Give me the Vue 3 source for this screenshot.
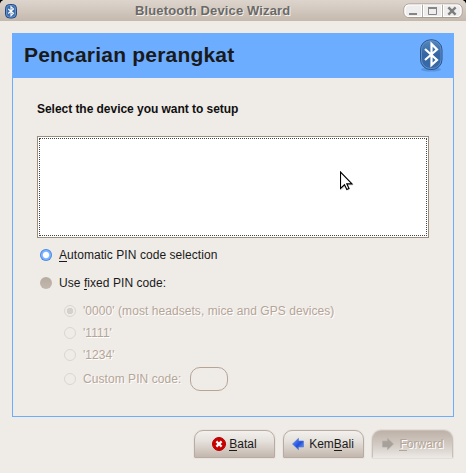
<script setup>
const pins = [
  { text: "'0000' (most headsets, mice and GPS devices)", on: true, cls: 'p0' },
  { text: "'1111'", on: false, cls: 'p1' },
  { text: "'1234'", on: false, cls: 'p2' },
  { text: 'Custom PIN code:', on: false, cls: 'p3', entry: true },
]
</script>

<template>
  <div class="window">
    <header class="titlebar">
      <svg class="app-icon" width="12" height="15" viewBox="0 0 12 15">
        <rect x=".5" y=".5" width="11" height="13.500" rx="4" fill="#3d6dab" stroke="#204a87" />
        <rect x="1.500" y="1.500" width="9" height="11.500" rx="3" fill="none" stroke="#6e9acd" stroke-width=".8" />
        <path d="M3.200 5 8.500 9.300 6 11.700V2.700l2.500 2.200L3.200 9.500" fill="none" stroke="#fff" stroke-width="1.100" />
      </svg>
      <h1 class="caption"><span>Bluetooth Device Wizard</span></h1>
      <div class="controls">
        <svg width="60" height="16" viewBox="0 0 60 16">
          <rect x=".9" y="1" width="58.200" height="13.500" rx="5" fill="#efeded" stroke="#a99c91" />
          <rect x="2" y="2" width="56" height="11.500" rx="4" fill="none" stroke="#fff" stroke-width="1.200" />
          <path d="M19.500 1.500v12.500M39.500 1.500v12.500" stroke="#fff" stroke-width="3" />
          <path d="M19.500 1.500v12.500M39.500 1.500v12.500" stroke="#b5aaa0" />
          <path d="M6 11h8" stroke="#858585" stroke-width="2" />
          <path d="M25.500 5v6.500h8V5" fill="none" stroke="#858585" />
          <path d="M25 5h9" stroke="#858585" stroke-width="2" />
          <path d="m46.200 5.200 5.600 5.600M51.800 5.200l-5.600 5.600" stroke="#7d7d7d" stroke-width="2.400" stroke-linecap="square" />
        </svg>
      </div>
    </header>

    <main class="page">
      <div class="banner">
        <h2><span>Pencarian perangkat</span></h2>
        <svg class="logo" width="24" height="33" viewBox="0 0 24 33">
          <defs>
            <linearGradient id="bt" x1="0" y1="0" x2="0" y2="1">
              <stop offset="0" stop-color="#5688bd" />
              <stop offset=".5" stop-color="#3465a4" />
              <stop offset="1" stop-color="#396ba9" />
            </linearGradient>
          </defs>
          <ellipse cx="12" cy="30.500" rx="10" ry="2" fill="#3465a4" opacity=".35" />
          <rect x="1.500" y=".8" width="21.500" height="29.700" rx="10" fill="url(#bt)" stroke="#275590" />
          <rect x="2.500" y="1.800" width="19.500" height="27.700" rx="9" fill="none" stroke="#628fc4" />
          <path d="M6 10 18 21 12.500 26V5l5.500 5.500L6 21" fill="none" stroke="#fff" stroke-width="2.200" />
        </svg>
      </div>
      <div class="content">
        <p class="prompt"><span>Select the device you want to setup</span></p>
        <div class="devices"><div class="focus"></div></div>
        <label class="row auto"><i class="radio active"></i><span class="t"><u>A</u>utomatic PIN code selection</span></label>
        <label class="row fixed"><i class="radio idle"></i><span class="t">Use <u>f</u>ixed PIN code:</span></label>
        <div class="pins">
          <label v-for="p in pins" :key="p.text" class="row dim" :class="p.cls">
            <i class="radio off" :class="{ on: p.on }"></i><span class="t">{{ p.text }}</span>
            <b v-if="p.entry" class="entry"></b>
          </label>
        </div>
      </div>
      <svg class="pointer" width="15" height="22" viewBox="0 0 15 22">
        <path d="M1.500 2.500v17l4-4 2.200 4.200 2.300-1.200-2-4h5z" fill="#777" opacity=".25" />
        <path d="M.5 1v16.500l4-3.700 2.300 4.700 2.200-1-2.200-4.700H12z" fill="#fff" stroke="#000" stroke-width="1.150" />
      </svg>
    </main>

    <footer class="actions">
      <button class="btn">
        <svg width="14" height="14" viewBox="0 0 14 14">
          <circle cx="7" cy="7" r="6.500" fill="#cc0000" stroke="#b00000" />
          <path d="m5.200 5.200 3.600 3.600M8.800 5.200 5.200 8.800" stroke="#fff" stroke-width="2.300" stroke-linecap="square" />
        </svg>
        <span class="t"><u>B</u>atal</span>
      </button>
      <button class="btn back">
        <svg width="12" height="14" viewBox="0 0 12 14">
          <defs>
            <linearGradient id="ar" x1="0" y1="0" x2="1" y2="1">
              <stop offset="0" stop-color="#6d9cff" />
              <stop offset=".55" stop-color="#2050dc" />
              <stop offset="1" stop-color="#7ba2f5" />
            </linearGradient>
          </defs>
          <path d="M.5 7 6.500 1.300v2.700h5v6h-5v2.700z" fill="url(#ar)" stroke="#4d76d0" stroke-width=".6" />
        </svg>
        <span class="t">Kem<u>B</u>ali</span>
      </button>
      <button class="btn disabled" disabled>
        <svg width="12" height="14" viewBox="0 0 12 14">
          <path d="M11.500 7 5.500 1.300v2.700h-5v6h5v2.700z" fill="#a7a19b" stroke="#b3aca6" stroke-width=".6" />
        </svg>
        <span class="t"><u>F</u>orward</span>
      </button>
    </footer>
  </div>
</template>

<style>
body { background: #000; }
</style>

<style scoped>
* { box-sizing: border-box; }
.window {
  width: 466px; height: 473px; overflow: hidden;
  display: flex; flex-direction: column;
  background: #efebe7; border-radius: 5px 5px 0 0;
  font: 12px/14px "Liberation Sans", Arial, sans-serif; color: #1a1a1a;
}
h1, h2, p { margin: 0; }
.titlebar {
  height: 21px; flex: none; display: flex; align-items: flex-start;
  padding: 0 3px 0 5px; background: linear-gradient(#ddd5cd, #c5b9ae);
}
.app-icon { margin-top: 4px; }
.caption {
  flex: 1; padding: 3px 0 0 118px; font-size: 13px; line-height: 16px; white-space: nowrap;
  letter-spacing: .13px; color: #6b6967; text-shadow: 1px 1px #f5f1ed;
}
.controls { height: 16px; margin-top: 3px; }
.controls svg { display: block; }
.page {
  position: relative; flex: none; width: 442px; height: 384px;
  margin: 12px 0 0 12px; border: 1px solid #6cadff;
}
.banner {
  height: 44px; display: flex; justify-content: space-between; align-items: flex-start;
  padding: 5px 10px 0 11px; background: #6cadff;
}
h2 { font-size: 21px; line-height: 24px; padding-top: 4px; white-space: nowrap; letter-spacing: .2px; }
.content { padding: 24px 24px 0; }
.prompt { font-weight: bold; white-space: nowrap; color: #101010; letter-spacing: -.04px; }
.devices {
  height: 102px; margin-top: 20px; padding: 1px;
  background: #fff; border: 1px solid #9c8c7e;
}
.focus { height: 98px; border: 1px dotted #444; }
.row { display: flex; align-items: center; height: 14px; white-space: nowrap; letter-spacing: .06px; }
.auto { margin-top: 10px; }
.fixed { margin-top: 14px; }
.pins { margin: 14px 0 0 24px; }
.p1, .p2 { margin-top: 8px; }
.p3 { margin-top: 10px; }
.radio { flex: none; width: 12px; height: 12px; margin: 0 7px 0 3px; border-radius: 50%; }
.active { background: radial-gradient(circle, #fff 0 2.700px, #7ab3ff 3.700px 4.500px, #3e7fd8 5.800px); }
.idle { background: linear-gradient(#b7aba1, #c3b8ae); }
.off { border: 1.500px solid #dad7d3; }
.on { background: radial-gradient(circle, #d3d1ce 0 3px, transparent 3.500px); }
.dim { color: #b5a597; text-shadow: 1px 1px #fff; }
.entry { width: 38px; height: 24px; margin-left: 9px; border: 1px solid #b5a597; border-radius: 10px; flex: none; }
u { text-decoration: none; box-shadow: 0 -1px currentColor inset; }
.pointer { position: absolute; left: 327px; top: 137px; }
.actions { display: flex; justify-content: flex-end; gap: 8px; padding: 13px 13px 0 0; }
.btn {
  width: 81px; height: 28px; display: flex; align-items: center; justify-content: center; gap: 3px;
  padding: 0; font: inherit; color: inherit;
  border: 1px solid #b8aca2; border-radius: 9px 9px 1px 1px;
  background: linear-gradient(#f3f0ed, #e5e0db 40%, #c3b7ad);
  box-shadow: 0 0 0 1px #e9e4df;
}
.back { gap: 5px; padding-right: 1px; }
.disabled {
  gap: 5px; padding-left: 1px; color: #b5a597; text-shadow: 1px 1px #fff;
  border-color: #c9bfb7; background: linear-gradient(#beb2a8, #d1c9c2 50%, #ebe7e3);
  border-bottom-color: #ebe7e3;
  box-shadow: 0 0 0 1px #e3deda;
}
</style>
